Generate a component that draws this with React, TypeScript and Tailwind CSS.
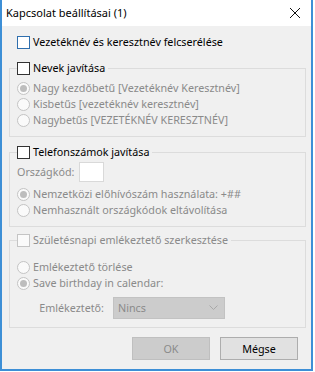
import React from "react";

const font = { fontFamily: '"Noto Sans", sans-serif' };

function Check({ disabled = false, focus = false }: { disabled?: boolean; focus?: boolean }) {
  const cls = disabled
    ? "border-[#c4c4c4] bg-[#fafafa]"
    : focus
    ? "border-[#2f6fae] bg-white"
    : "border-[#333333] bg-white";
  return <span className={`inline-block w-[13px] h-[13px] border shrink-0 ${cls}`} />;
}

function Radio({ checked = false }: { checked?: boolean }) {
  return (
    <span className="flex items-center justify-center w-[13px] h-[13px] rounded-full border border-[#c4c4c4] bg-[#fafafa] shrink-0">
      {checked && <span className="w-[7px] h-[7px] rounded-full bg-[#bdbdbd]" />}
    </span>
  );
}

function RadioRow({ label, checked = false }: { label: string; checked?: boolean }) {
  return (
    <div className="flex items-center h-[16px] gap-[3px] pl-[7px]">
      <Radio checked={checked} />
      <span className="text-[#8a8a8a] whitespace-nowrap">{label}</span>
    </div>
  );
}

export default function App() {
  return (
    <div
      className="w-[315px] h-[372px] bg-white text-[10.75px] leading-[16px] text-black overflow-hidden"
      style={font}
    >
      <div className="w-[313px] h-[371px] border-l-2 border-r-2 border-b-2 border-[#3d8fd6] flex flex-col">
        {/* Title bar */}
        <div className="h-[26px] bg-white flex items-center justify-between pl-[4px] pr-[8px] shrink-0">
          <span className="text-[11px]">Kapcsolat beállításai (1)</span>
          <svg width="12" height="12" viewBox="0 0 12 12" className="mr-[2px]">
            <path d="M1 1 L11 11 M11 1 L1 11" stroke="#111" strokeWidth="1" fill="none" />
          </svg>
        </div>

        {/* Body */}
        <div className="flex-1 bg-[#f0f0f0] flex flex-col pt-[8px] px-[7px]">
          <div className="flex items-center h-[16px] gap-[3px] pl-[8px]">
            <Check focus />
            <span>Vezetéknév és keresztnév felcserélése</span>
          </div>

          {/* Group 1 */}
          <fieldset className="mt-[10px] border border-[#dcdcdc] pb-[8px] w-[297px]">
            <legend className="ml-[7px] pr-[3px]">
              <div className="flex items-center h-[16px] gap-[3px]">
                <Check />
                <span>Nevek javítása</span>
              </div>
            </legend>
            <div className="pt-[4px] flex flex-col">
              <RadioRow label="Nagy kezdőbetű [Vezetéknév Keresztnév]" checked />
              <RadioRow label="Kisbetűs [vezetéknév keresztnév]" />
              <RadioRow label="Nagybetűs [VEZETÉKNÉV KERESZTNÉV]" />
            </div>
          </fieldset>

          {/* Group 2 */}
          <fieldset className="mt-[7px] border border-[#dcdcdc] pb-[8px] w-[297px]">
            <legend className="ml-[7px] pr-[3px]">
              <div className="flex items-center h-[16px] gap-[3px]">
                <Check />
                <span>Telefonszámok javítása</span>
              </div>
            </legend>
            <div className="pt-[2px] flex flex-col">
              <div className="flex items-center h-[20px] pl-[7px] gap-[5px]">
                <span className="text-[#8a8a8a]">Országkód:</span>
                <span className="w-[25px] h-[20px] bg-white border border-[#d9d9d9]" />
              </div>
              <div className="mt-[4px] flex flex-col">
                <RadioRow label="Nemzetközi előhívószám használata: +##" checked />
                <RadioRow label="Nemhasznált országkódok eltávolítása" />
              </div>
            </div>
          </fieldset>

          {/* Group 3 */}
          <fieldset className="mt-[5px] border border-[#dcdcdc] pb-[8px] w-[297px]">
            <legend className="ml-[7px] pr-[3px]">
              <div className="flex items-center h-[16px] gap-[3px]">
                <Check disabled />
                <span className="text-[#8a8a8a]">Születésnapi emlékeztető szerkesztése</span>
              </div>
            </legend>
            <div className="pt-[11px] flex flex-col">
              <RadioRow label="Emlékeztető törlése" />
              <RadioRow label="Save birthday in calendar:" checked />
              <div className="mt-[6px] flex items-center h-[22px]">
                <span className="w-[94px] text-right text-[#8a8a8a]">Emlékeztető:</span>
                <div className="ml-[9px] w-[112px] h-[22px] bg-[#cccccc] border border-[#c2c2c2] flex items-center justify-between pl-[4px] pr-[6px]">
                  <span className="text-[#8a8a8a]">Nincs</span>
                  <svg width="9" height="6" viewBox="0 0 9 6">
                    <path d="M0.5 0.5 L4.5 4.5 L8.5 0.5" stroke="#a8a8a8" strokeWidth="1" fill="none" />
                  </svg>
                </div>
              </div>
            </div>
          </fieldset>

          {/* Buttons */}
          <div className="mt-[9px] flex justify-end gap-[10px] pr-[6px]">
            <div className="w-[78px] h-[23px] bg-[#cccccc] border border-[#bfbfbf] flex items-center justify-center text-[#8a8a8a]">
              OK
            </div>
            <div className="w-[78px] h-[23px] bg-[#e1e1e1] border border-[#adadad] flex items-center justify-center">
              Mégse
            </div>
          </div>
        </div>
      </div>
    </div>
  );
}
